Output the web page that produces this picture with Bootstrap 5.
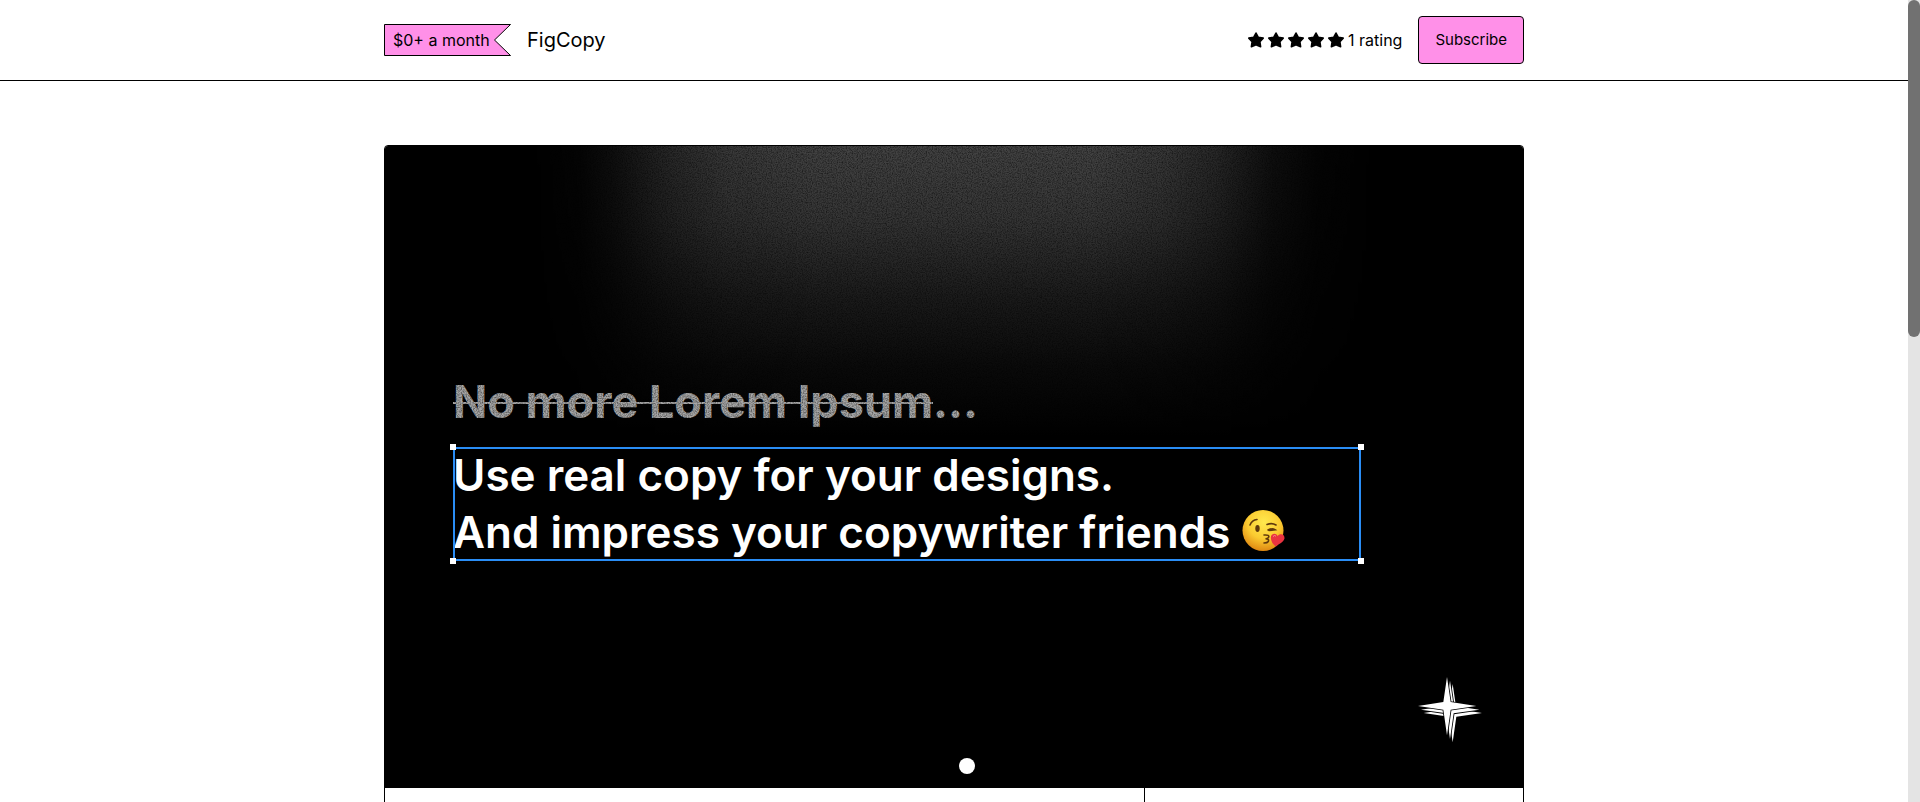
<!DOCTYPE html>
<html lang="en">
<head>
<meta charset="utf-8">
<meta name="viewport" content="width=device-width, initial-scale=1">
<title>FigCopy</title>
<link href="https://cdn.jsdelivr.net/npm/bootstrap@5.3.0/dist/css/bootstrap.min.css" rel="stylesheet">
<style>
  :root { --pink: #ff90e8; --rail: 12px; }
  body { font-family: Inter, "Liberation Sans", sans-serif; font-size: 16px; line-height: 24px; color: #000; background: #fff; padding-right: var(--rail); overflow: hidden; }
  .page-width { max-width: 1140px; }
  .top-bar { height: 81px; border-bottom: 1px solid #000; }
  .price-tag { position: relative; height: 32px; width: 127px; padding-left: 9px; line-height: 32px; white-space: nowrap; }
  .price-tag svg { position: absolute; inset: 0; z-index: -1; }
  .product-name { font-size: 20px; line-height: 28px; font-weight: 400; }
  .btn-subscribe { --bs-btn-font-size: 15px; --bs-btn-line-height: 24px; --bs-btn-bg: var(--pink); --bs-btn-color: #000; --bs-btn-border-color: #000; --bs-btn-border-radius: 4px; --bs-btn-hover-bg: var(--pink); --bs-btn-hover-color: #000; --bs-btn-hover-border-color: #000; --bs-btn-padding-x: 16px; --bs-btn-padding-y: 11px; }
  .product { margin-top: 64px; border: 1px solid #000; border-radius: 4px 4px 0 0; overflow: hidden; }
  .cover { background: #000; padding: 227px 162px 227px 68px; }
  .glow { inset: 0 0 auto 0; height: 290px; background: linear-gradient(#434343 0, #353535 25%, #1b1b1b 52%, #0a0a0a 76%, #000 100%);
    --fade: linear-gradient(90deg, transparent 13%, rgba(0,0,0,.06) 17%, rgba(0,0,0,.22) 20%, rgba(0,0,0,.6) 25%, rgba(0,0,0,.85) 30%, #000 38%, #000 62%, rgba(0,0,0,.85) 68%, rgba(0,0,0,.6) 73%, rgba(0,0,0,.22) 78%, rgba(0,0,0,.06) 82%, transparent 87%);
    -webkit-mask-image: var(--fade); mask-image: var(--fade); }
  .grain { inset: 0 0 auto 0; height: 290px; pointer-events: none; }
  .headline { font-size: 44px; line-height: 57px; font-weight: 600; white-space: nowrap; }
  .headline.struck { font-size: 45px; color: #a6a6a6; font-weight: 700; margin-bottom: 17px; }
  .struck s { text-decoration-thickness: 2px; }
  .selection { color: #fff; outline: 2px solid #2a8df5; outline-offset: -2px; }
  .handle { width: 6px; height: 6px; background: #fff; }
  .emoji { width: 43px; height: 43px; vertical-align: -4px; }
  .spark { right: 25px; bottom: 45px; }
  .pager { bottom: 14px; padding-left: 26px; }
  .pager button { width: 16px; height: 16px; background: #fff; }
  .details { min-height: 200px; }
  .details-side { border-left: 1px solid #000; }
  .rail { inset: 0 0 0 auto; width: var(--rail); background: #e4e4e4; }
  .rail-thumb { height: 42%; border-radius: 6px; background: #717171; }
</style>
<script src="https://cdn.jsdelivr.net/npm/bootstrap@5.3.0/dist/js/bootstrap.bundle.min.js"></script>
</head>
<body>
<header class="top-bar d-flex align-items-center">
  <div class="page-width container-fluid p-0 d-flex align-items-center">
    <div class="price-tag z-0">
      <svg width="127" height="32" viewBox="0 0 127 32" aria-hidden="true"><path d="M.5.5H126.500L110.500 16l16 15.500H.5z" fill="#ff90e8" stroke="#000"/></svg>
      $0+ a month
    </div>
    <h1 class="product-name mb-0 ms-3">FigCopy</h1>
    <div class="ms-auto me-3 d-flex align-items-center gap-1">
      <svg width="96" height="16" viewBox="0 0 96 16" role="img" aria-label="5 stars">
        <defs><path id="star" d="M8 1 10.200 5.200 15.200 6.100 11.900 9.800 12.600 14.700 8 12.700 3.400 14.700 4.100 9.800.8 6.100 5.800 5.200z" stroke="#000" stroke-width="1.600" stroke-linejoin="round"/></defs>
        <use href="#star"/><use href="#star" x="20"/><use href="#star" x="40"/><use href="#star" x="60"/><use href="#star" x="80"/>
      </svg>
      <span>1 rating</span>
    </div>
    <button type="button" class="btn btn-subscribe">Subscribe</button>
  </div>
</header>

<main class="page-width container-fluid p-0">
  <article class="product">
    <section class="cover position-relative">
      <div class="glow position-absolute"></div>
      <div class="position-relative">
        <p class="headline struck"><s>No more Lorem Ipsum</s>...</p>
        <div class="selection position-relative">
          <h2 class="headline mb-0">Use real copy for your designs.<br>And impress your copywriter friends
            <svg class="emoji" viewBox="0 0 43 43" role="img" aria-label="Face blowing a kiss">
              <defs><radialGradient id="face" cx=".52" cy=".3" r=".72"><stop offset="0" stop-color="#ffe94e"/><stop offset=".55" stop-color="#fbcb31"/><stop offset="1" stop-color="#dd8410"/></radialGradient></defs>
              <circle cx="21" cy="21.500" r="20.500" fill="url(#face)"/>
              <g fill="none" stroke="#60390c" stroke-width="1.600" stroke-linecap="round"><path d="M8 16q2-5 7-5.500M25 15.500q5-2 9 .5M26 21q4-2 7-.3l-6 .8M22 26q6-.5 4.500 2.500-1 1-3 1.200 4 0 2.800 2.800-.9 1.500-4.300 1.500"/></g>
              <ellipse cx="15.500" cy="19.500" rx="2.200" ry="3.400" fill="#60390c"/>
              <path d="M34 37.500Q29 34 28.800 28.500C29 24.500 34 23.500 35.500 27 38 24 43 25 42.500 29.500 41.500 33.500 37 34.500 34 37.500z" fill="#e93340"/>
              <path d="M31 27.500q1.500-1.800 3-.3" stroke="#ff8790" fill="none"/>
            </svg></h2>
          <span class="handle position-absolute top-0 start-0 translate-middle"></span>
          <span class="handle position-absolute top-0 start-100 translate-middle"></span>
          <span class="handle position-absolute top-100 start-0 translate-middle"></span>
          <span class="handle position-absolute top-100 start-100 translate-middle"></span>
        </div>
      </div>
      <svg class="grain position-absolute w-100" aria-hidden="true">
        <filter id="noise" x="0" y="0" width="100%" height="100%"><feTurbulence type="fractalNoise" baseFrequency=".8" numOctaves="2" seed="4"/><feColorMatrix values="0 0 0 0 0  0 0 0 0 0  0 0 0 0 0  1.100 0 0 0 -.4"/></filter>
        <rect width="100%" height="100%" filter="url(#noise)"/>
      </svg>
      <svg class="spark position-absolute" width="80" height="66" viewBox="0 0 240 198" aria-hidden="true">
        <defs><path id="spark" d="M87 0 98 75 175 87 98 98 87 175 76 98 0 87 76 75z"/></defs>
        <g fill="#fff" stroke="#000" stroke-width="5" paint-order="stroke"><use href="#spark" x="17" y="21"/><use href="#spark" x="9" y="11"/><use href="#spark"/></g>
      </svg>
      <div class="pager position-absolute start-0 end-0 d-flex justify-content-center"><button type="button" class="border-0 p-0 rounded-circle" aria-label="Show cover 1"></button></div>
    </section>
    <section class="details row g-0">
      <div class="col-8"></div>
      <div class="details-side col-4"></div>
    </section>
  </article>
</main>
<div class="rail position-fixed" aria-hidden="true"><div class="rail-thumb"></div></div>
</body>
</html>
